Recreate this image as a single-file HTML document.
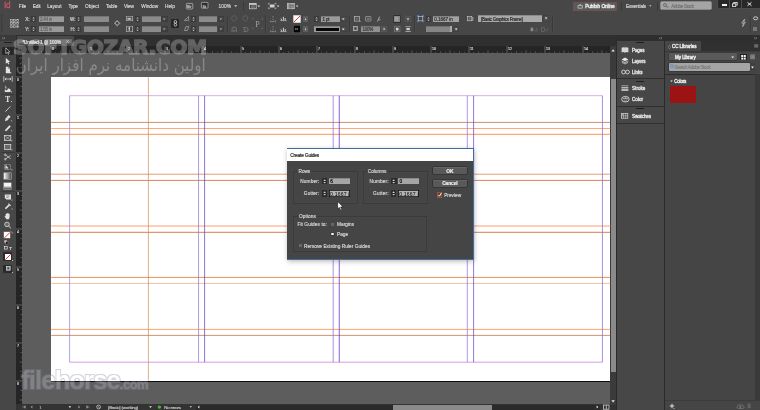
<!DOCTYPE html>
<html lang="en"><head><meta charset="utf-8"><title>Adobe InDesign - Create Guides</title>
<style>
html,body{margin:0;padding:0;background:#474747;}
body{width:760px;height:410px;position:relative;overflow:hidden;font-family:"Liberation Sans",sans-serif;}
#app{position:absolute;left:0;top:0;width:760px;height:410px;overflow:hidden;background:#474747;will-change:transform;}
#app div,#app span.t,#app svg{position:absolute;display:block;}
#app span.t{z-index:2;white-space:nowrap;-webkit-text-stroke:0.17px currentColor;}
#app svg{overflow:visible;}
</style></head>
<body><div id="app">
<div style="left:0px;top:34.5px;width:760px;height:12px;background:#2f2f2f;"></div>
<div style="left:17px;top:36px;width:57px;height:10px;background:#4a4a4a;border-radius:1px 1px 0 0;"></div>
<div style="left:0px;top:34.5px;width:16px;height:376px;background:#474747;"></div>
<div style="left:0px;top:34.5px;width:16px;height:6px;background:#3a3a3a;"></div>
<div style="left:15.5px;top:40px;width:0.6px;height:370px;background:#2a2a2a;"></div>
<div style="left:15.9px;top:45.8px;width:600.6px;height:7.2px;background:#252525;"></div>
<div style="left:15.9px;top:45.8px;width:6.1px;height:359px;background:#252525;"></div>
<div style="left:22px;top:53px;width:588.2px;height:351.3px;background:#5d5d5d;"></div>
<div style="left:50.5px;top:76.6px;width:560px;height:305px;background:#0c0c0c;"></div>
<div style="left:51.2px;top:77.2px;width:559px;height:303.5px;background:#fff;"></div>
<div style="left:15.9px;top:404.3px;width:600.6px;height:6px;background:#333;"></div>
<div style="left:610.2px;top:46px;width:6.3px;height:358.5px;background:#3b3b3b;"></div>
<div style="left:610.9px;top:78.8px;width:5.2px;height:293.7px;background:#8a8a8a;"></div>
<div style="left:196px;top:404.5px;width:404px;height:5.5px;background:#2a2a2a;"></div>
<div style="left:393.2px;top:405px;width:99.3px;height:5px;background:#8a8a8a;"></div>
<svg style="left:0px;top:0px;" width="760" height="410" viewBox="0 0 760 410"><line x1="51.2" y1="122.4" x2="610.2" y2="122.4" stroke="#b25f2d" stroke-width="0.7"/><line x1="51.2" y1="128.5" x2="610.2" y2="128.5" stroke="#ffa76f" stroke-width="0.95"/><line x1="51.2" y1="134.3" x2="610.2" y2="134.3" stroke="#ff7f2f" stroke-width="0.85"/><line x1="51.2" y1="174.2" x2="610.2" y2="174.2" stroke="#d2733c" stroke-width="0.7"/><line x1="51.2" y1="180.4" x2="610.2" y2="180.4" stroke="#c9520e" stroke-width="0.7"/><line x1="51.2" y1="226" x2="610.2" y2="226" stroke="#ffbf9c" stroke-width="1.7"/><line x1="51.2" y1="232.3" x2="610.2" y2="232.3" stroke="#c7520e" stroke-width="0.75"/><line x1="51.2" y1="277.4" x2="610.2" y2="277.4" stroke="#dd631a" stroke-width="0.7"/><line x1="51.2" y1="283.4" x2="610.2" y2="283.4" stroke="#eabc99" stroke-width="0.9"/><line x1="51.2" y1="329.4" x2="610.2" y2="329.4" stroke="#ff9958" stroke-width="0.9"/><line x1="51.2" y1="335.4" x2="610.2" y2="335.4" stroke="#b26841" stroke-width="0.7"/><line x1="148.4" y1="77.2" x2="148.4" y2="380.7" stroke="#cb854e" stroke-width="0.65"/><line x1="69.6" y1="95.7" x2="602.5" y2="95.7" stroke="#cb93da" stroke-width="0.75"/><line x1="69.6" y1="362.2" x2="602.5" y2="362.2" stroke="#c280d4" stroke-width="0.75"/><line x1="69.6" y1="95.7" x2="69.6" y2="362.2" stroke="#9a84de" stroke-width="0.75"/><line x1="602.45" y1="95.7" x2="602.45" y2="362.2" stroke="#8f68db" stroke-width="0.75"/><line x1="198.55" y1="95.7" x2="198.55" y2="362.2" stroke="#8773d8" stroke-width="0.7"/><line x1="204.6" y1="95.7" x2="204.6" y2="362.2" stroke="#5c38c7" stroke-width="0.7"/><line x1="333.2" y1="95.7" x2="333.2" y2="362.2" stroke="#8761e0" stroke-width="0.7"/><line x1="339.25" y1="95.7" x2="339.25" y2="362.2" stroke="#571ecb" stroke-width="0.7"/><line x1="467.3" y1="95.7" x2="467.3" y2="362.2" stroke="#8a70df" stroke-width="0.7"/><line x1="473.6" y1="95.7" x2="473.6" y2="362.2" stroke="#663bcd" stroke-width="0.7"/></svg>
<div style="left:616.3px;top:34.5px;width:144px;height:6.5px;background:#2e2e2e;"></div>
<div style="left:616.3px;top:41px;width:48px;height:369px;background:#474747;"></div>
<div style="left:616.2px;top:41px;width:0.9px;height:369px;background:#2a2a2a;"></div>
<div style="left:664px;top:41px;width:1px;height:369px;background:#2a2a2a;"></div>
<div style="left:665px;top:41px;width:95px;height:369px;background:#454545;"></div>
<div style="left:701px;top:41px;width:59px;height:9.8px;background:#303030;"></div>
<div style="left:665px;top:50.6px;width:95px;height:0.6px;background:#3a3a3a;"></div>
<div style="left:665px;top:41px;width:36px;height:10px;background:#464646;"></div>
<div style="left:617px;top:78.3px;width:47px;height:0.7px;background:#2f2f2f;"></div>
<div style="left:617px;top:105.6px;width:47px;height:0.7px;background:#2f2f2f;"></div>
<div style="left:617px;top:122.5px;width:47px;height:0.7px;background:#2f2f2f;"></div>
<div style="left:636px;top:42.2px;width:8px;height:1px;background:#1e1e1e;border-radius:0.5px;"></div>
<div style="left:636px;top:80.6px;width:8px;height:1px;background:#1e1e1e;border-radius:0.5px;"></div>
<div style="left:636px;top:107.9px;width:8px;height:1px;background:#1e1e1e;border-radius:0.5px;"></div>
<div style="left:669px;top:53.4px;width:67.5px;height:6.8px;background:#5a5a5a;border-radius:1px;box-shadow:0 0 0 0.5px #333;"></div>
<div style="left:740px;top:53.6px;width:7px;height:6.6px;background:#222;"></div>
<div style="left:669px;top:62.8px;width:80.5px;height:8.6px;background:#a5a5a5;border-radius:1px;box-shadow:0 0 0 0.6px #2c2c2c;"></div>
<div style="left:665px;top:73.8px;width:90.5px;height:0.7px;background:#2c2c2c;"></div>
<div style="left:755.2px;top:74px;width:4.8px;height:325.5px;background:#3a3a3a;"></div>
<div style="left:670px;top:86px;width:25.6px;height:16.6px;background:#9b1313;"></div>
<div style="left:665px;top:399.8px;width:95px;height:0.6px;background:#3b3b3b;"></div>
<div style="left:286.6px;top:148.3px;width:187.2px;height:111.4px;background:#456a9c;box-shadow:0 1px 5px 0.5px rgba(0,0,20,.28);"></div>
<div style="left:287.2px;top:148.9px;width:186px;height:12px;background:#fff;"></div>
<div style="left:287.2px;top:160.9px;width:186px;height:98.3px;background:#454545;"></div>
<div style="left:293.4px;top:171px;width:64.3px;height:33.2px;background:transparent;box-shadow:inset 0 0 0 0.7px #343434, inset 0 0 0 1.2px rgba(255,255,255,.05);border-radius:1px;"></div>
<div style="left:363px;top:171px;width:64.5px;height:33.2px;background:transparent;box-shadow:inset 0 0 0 0.7px #343434, inset 0 0 0 1.2px rgba(255,255,255,.05);border-radius:1px;"></div>
<div style="left:293.4px;top:215.7px;width:134.1px;height:36.4px;background:transparent;box-shadow:inset 0 0 0 0.7px #343434, inset 0 0 0 1.2px rgba(255,255,255,.05);border-radius:1px;"></div>
<div style="left:297.5px;top:169.5px;width:13.5px;height:3px;background:#454545;"></div>
<div style="left:367px;top:169.5px;width:20px;height:3px;background:#454545;"></div>
<div style="left:297.8px;top:214.2px;width:19.5px;height:3px;background:#454545;"></div>
<div style="left:432.5px;top:167.1px;width:34.8px;height:7.1px;background:#595959;border-radius:1px;box-shadow:0 0 0 0.6px #292929, inset 0 0.6px 0 rgba(255,255,255,.16);"></div>
<div style="left:432.5px;top:179.5px;width:34.8px;height:7.1px;background:#595959;border-radius:1px;box-shadow:0 0 0 0.6px #292929, inset 0 0.6px 0 rgba(255,255,255,.16);"></div>
<div style="left:322.1px;top:177.7px;width:5.3px;height:6.8px;background:#2b2b2b;border-radius:0.8px;"></div>
<svg style="left:322.1px;top:177.7px;" width="5.3" height="6.8" viewBox="0 0 5.3 6.8"><path d="M1.3 2.9 L2.65 1.2 L4 2.9Z M1.3 3.9 L2.65 5.6 L4 3.9Z" fill="#cfcfcf"/></svg>
<div style="left:328.8px;top:177.7px;width:21.4px;height:6.5px;background:#a6a6a6;box-shadow:inset 0 0.6px 0 #6a6a6a;"></div>
<div style="left:322px;top:190px;width:5.3px;height:6.8px;background:#2b2b2b;border-radius:0.8px;"></div>
<svg style="left:322px;top:190px;" width="5.3" height="6.8" viewBox="0 0 5.3 6.8"><path d="M1.3 2.9 L2.65 1.2 L4 2.9Z M1.3 3.9 L2.65 5.6 L4 3.9Z" fill="#cfcfcf"/></svg>
<div style="left:328.7px;top:190px;width:21.6px;height:6.9px;background:#b4b4b4;box-shadow:inset 0 0 0 0.8px #0c0c0c;"></div>
<div style="left:391.3px;top:177.7px;width:5.3px;height:6.8px;background:#2b2b2b;border-radius:0.8px;"></div>
<svg style="left:391.3px;top:177.7px;" width="5.3" height="6.8" viewBox="0 0 5.3 6.8"><path d="M1.3 2.9 L2.65 1.2 L4 2.9Z M1.3 3.9 L2.65 5.6 L4 3.9Z" fill="#cfcfcf"/></svg>
<div style="left:398px;top:177.7px;width:21.4px;height:6.5px;background:#a6a6a6;box-shadow:inset 0 0.6px 0 #6a6a6a;"></div>
<div style="left:391.2px;top:190px;width:5.3px;height:6.8px;background:#2b2b2b;border-radius:0.8px;"></div>
<svg style="left:391.2px;top:190px;" width="5.3" height="6.8" viewBox="0 0 5.3 6.8"><path d="M1.3 2.9 L2.65 1.2 L4 2.9Z M1.3 3.9 L2.65 5.6 L4 3.9Z" fill="#cfcfcf"/></svg>
<div style="left:397.9px;top:190px;width:21.6px;height:6.9px;background:#b4b4b4;box-shadow:inset 0 0 0 0.8px #0c0c0c;"></div>
<div style="left:331.1px;top:222.7px;width:2.9px;height:2.9px;background:#5e5e5e;border-radius:50%;box-shadow:inset 0 0 0 0.5px #777;"></div>
<div style="left:331.3px;top:232.9px;width:2.6px;height:2.6px;background:#f4f4f4;border-radius:50%;box-shadow:0 0 0 0.6px #2e2e2e;"></div>
<div style="left:298.5px;top:244.1px;width:3.4px;height:3.4px;background:#6a6a6a;border-radius:0.5px;"></div>
<div style="left:436.6px;top:192.4px;width:5.4px;height:5.6px;background:#4a4a4a;box-shadow:inset 0 0 0 0.8px #b4522e;border-radius:0.6px;"></div>
<svg style="left:436.6px;top:192.4px;" width="5.4" height="5.6" viewBox="0 0 5.4 5.6"><path d="M1.3 2.9 L2.4 4.2 L4.5 0.9" fill="none" stroke="#fff" stroke-width="0.9"/></svg>
<svg style="left:336.7px;top:200.7px;" width="7.5" height="10.6" viewBox="0 0 6 8.5"><path d="M0.5 0.4 L0.5 6.4 L1.9 5.2 L3 7.6 L4 7.1 L2.9 4.8 L4.8 4.7Z" fill="#fff" stroke="#111" stroke-width="0.5" stroke-linejoin="round"/></svg>
<span id="t1" class="t" style="top:152.56px;font-size:4.9px;line-height:5.88px;color:#1a1a1a;left:290.3px;letter-spacing:-0.211px;">Create Guides</span>
<span id="t2" class="t" style="top:169.25px;font-size:4.75px;line-height:5.7px;color:#d6d6d6;left:298.6px;letter-spacing:-0.121px;">Rows</span>
<span id="t3" class="t" style="top:169.25px;font-size:4.75px;line-height:5.7px;color:#d6d6d6;left:367.8px;letter-spacing:-0.022px;">Columns</span>
<span id="t4" class="t" style="top:179.35px;font-size:4.75px;line-height:5.7px;color:#d6d6d6;right:440.7px;letter-spacing:0.112px;">Number:</span>
<span id="t5" class="t" style="top:191.45px;font-size:4.75px;line-height:5.7px;color:#d6d6d6;right:440.7px;letter-spacing:0.138px;">Gutter:</span>
<span id="t6" class="t" style="top:179.35px;font-size:4.75px;line-height:5.7px;color:#d6d6d6;right:371.4px;letter-spacing:0.112px;">Number:</span>
<span id="t7" class="t" style="top:191.45px;font-size:4.75px;line-height:5.7px;color:#d6d6d6;right:371.4px;letter-spacing:0.138px;">Gutter:</span>
<span id="t8" class="t" style="top:179.06px;font-size:4.9px;line-height:5.88px;color:#000;left:330.2px;-webkit-text-stroke-width:0.15px;">6</span>
<span id="t9" class="t" style="top:179.06px;font-size:4.9px;line-height:5.88px;color:#000;left:399.4px;-webkit-text-stroke-width:0.15px;">0</span>
<span id="t10" class="t" style="top:191.34px;font-size:5.1px;line-height:6.12px;color:#000;left:330.1px;letter-spacing:0.159px;-webkit-text-stroke-width:0px;">0.1667 i</span>
<span id="t11" class="t" style="top:191.34px;font-size:5.1px;line-height:6.12px;color:#000;left:399.3px;letter-spacing:0.159px;-webkit-text-stroke-width:0px;">0.1667 i</span>
<span id="t12" class="t" style="top:168.76px;font-size:4.9px;line-height:5.88px;color:#f0f0f0;left:449.9px;transform:translateX(-50%);font-weight:700;">OK</span>
<span id="t13" class="t" style="top:181.06px;font-size:4.9px;line-height:5.88px;color:#f0f0f0;left:449.9px;transform:translateX(-50%);font-weight:700;letter-spacing:-0.107px;">Cancel</span>
<span id="t14" class="t" style="top:193.35px;font-size:4.75px;line-height:5.7px;color:#d6d6d6;left:444.2px;letter-spacing:0.013px;">Preview</span>
<span id="t15" class="t" style="top:213.95px;font-size:4.75px;line-height:5.7px;color:#d6d6d6;left:299px;letter-spacing:0.089px;">Options</span>
<span id="t16" class="t" style="top:222.15px;font-size:4.75px;line-height:5.7px;color:#d6d6d6;left:297.4px;letter-spacing:0.096px;">Fit Guides to:</span>
<span id="t17" class="t" style="top:222.15px;font-size:4.75px;line-height:5.7px;color:#d6d6d6;left:337px;letter-spacing:0.042px;">Margins</span>
<span id="t18" class="t" style="top:232.35px;font-size:4.75px;line-height:5.7px;color:#d6d6d6;left:337px;letter-spacing:0.024px;">Page</span>
<span id="t19" class="t" style="top:244.05px;font-size:4.75px;line-height:5.7px;color:#d6d6d6;left:304px;letter-spacing:0.054px;">Remove Existing Ruler Guides</span>
<span id="t20" class="t" style="top:1.28px;font-size:8.2px;line-height:9.84px;color:#c05668;left:4px;letter-spacing:-0.32px;-webkit-text-stroke-width:0.3px;">Id</span>
<span id="t21" class="t" style="top:4.05px;font-size:4.75px;line-height:5.7px;color:#d6d6d6;left:18.8px;letter-spacing:-0.066px;">File</span>
<span id="t22" class="t" style="top:4.05px;font-size:4.75px;line-height:5.7px;color:#d6d6d6;left:32.8px;letter-spacing:-0.098px;">Edit</span>
<span id="t23" class="t" style="top:4.05px;font-size:4.75px;line-height:5.7px;color:#d6d6d6;left:47.2px;letter-spacing:0.005px;">Layout</span>
<span id="t24" class="t" style="top:4.05px;font-size:4.75px;line-height:5.7px;color:#d6d6d6;left:68.4px;letter-spacing:-0.226px;">Type</span>
<span id="t25" class="t" style="top:4.05px;font-size:4.75px;line-height:5.7px;color:#d6d6d6;left:84.9px;letter-spacing:0.112px;">Object</span>
<span id="t26" class="t" style="top:4.05px;font-size:4.75px;line-height:5.7px;color:#d6d6d6;left:106px;letter-spacing:-0.013px;">Table</span>
<span id="t27" class="t" style="top:4.05px;font-size:4.75px;line-height:5.7px;color:#d6d6d6;left:124px;letter-spacing:-0.055px;">View</span>
<span id="t28" class="t" style="top:4.05px;font-size:4.75px;line-height:5.7px;color:#d6d6d6;left:141.2px;letter-spacing:-0px;">Window</span>
<span id="t29" class="t" style="top:4.05px;font-size:4.75px;line-height:5.7px;color:#d6d6d6;left:165px;letter-spacing:0.055px;">Help</span>
<span id="t30" class="t" style="top:4.05px;font-size:4.75px;line-height:5.7px;color:#d6d6d6;left:218.4px;letter-spacing:0.113px;">100%</span>
<span id="t31" class="t" style="top:4.05px;font-size:4.75px;line-height:5.7px;color:#f0f0f0;left:585.2px;letter-spacing:-0.088px;-webkit-text-stroke-width:0.3px;">Publish Online</span>
<span id="t32" class="t" style="top:4.05px;font-size:4.75px;line-height:5.7px;color:#d6d6d6;left:626px;letter-spacing:-0.166px;">Essentials</span>
<span id="t33" class="t" style="top:3.65px;font-size:4.75px;line-height:5.7px;color:#747474;left:671.2px;letter-spacing:-0.404px;">Adobe Stock</span>
<span id="t34" class="t" style="top:39.54px;font-size:4.6px;line-height:5.52px;color:#e2e2e2;left:22.4px;letter-spacing:-0.107px;">*Untitled-1 @ 100%</span>
<span id="t35" class="t" style="top:404.96px;font-size:4.4px;line-height:5.28px;color:#c8c8c8;left:108.2px;letter-spacing:-0.145px;">[Basic] (working)</span>
<span id="t36" class="t" style="top:404.96px;font-size:4.4px;line-height:5.28px;color:#c8c8c8;left:164.2px;letter-spacing:-0.201px;">No errors</span>
<span id="t37" class="t" style="top:404.96px;font-size:4.4px;line-height:5.28px;color:#a8a8a8;left:39.2px;">1</span>
<span id="t38" class="t" style="top:47.77px;font-size:4.55px;line-height:5.46px;color:#e6e6e6;left:632px;letter-spacing:-0.1px;-webkit-text-stroke-width:0.32px;">Pages</span>
<span id="t39" class="t" style="top:59.17px;font-size:4.55px;line-height:5.46px;color:#e6e6e6;left:632px;letter-spacing:-0.01px;-webkit-text-stroke-width:0.32px;">Layers</span>
<span id="t40" class="t" style="top:70.17px;font-size:4.55px;line-height:5.46px;color:#e6e6e6;left:632px;letter-spacing:-0.005px;-webkit-text-stroke-width:0.32px;">Links</span>
<span id="t41" class="t" style="top:86.27px;font-size:4.55px;line-height:5.46px;color:#e6e6e6;left:632px;letter-spacing:0.041px;-webkit-text-stroke-width:0.32px;">Stroke</span>
<span id="t42" class="t" style="top:97.37px;font-size:4.55px;line-height:5.46px;color:#e6e6e6;left:632px;letter-spacing:0.067px;-webkit-text-stroke-width:0.32px;">Color</span>
<span id="t43" class="t" style="top:113.67px;font-size:4.55px;line-height:5.46px;color:#e6e6e6;left:632px;letter-spacing:-0.09px;-webkit-text-stroke-width:0.32px;">Swatches</span>
<span id="t44" class="t" style="top:44.07px;font-size:4.55px;line-height:5.46px;color:#f0f0f0;left:672px;letter-spacing:-0.073px;-webkit-text-stroke-width:0.32px;">CC Libraries</span>
<span id="t45" class="t" style="top:55.07px;font-size:4.55px;line-height:5.46px;color:#f2f2f2;left:675px;letter-spacing:-0.063px;-webkit-text-stroke-width:0.32px;">My Library</span>
<span id="t46" class="t" style="top:65.25px;font-size:4.75px;line-height:5.7px;color:#7c7c7c;left:674.4px;letter-spacing:-0.392px;">Search Adobe Stock</span>
<span id="t47" class="t" style="top:79.27px;font-size:4.55px;line-height:5.46px;color:#f0f0f0;left:674.2px;letter-spacing:-0.19px;-webkit-text-stroke-width:0.32px;">Colors</span>
<span id="t48" class="t" style="top:16.8px;font-size:4.5px;line-height:5.4px;color:#d6d6d6;left:25.2px;">X:</span>
<span id="t49" class="t" style="top:26.8px;font-size:4.5px;line-height:5.4px;color:#d6d6d6;left:25.2px;">Y:</span>
<span id="t50" class="t" style="top:16.8px;font-size:4.5px;line-height:5.4px;color:#d6d6d6;left:70px;">W:</span>
<span id="t51" class="t" style="top:26.8px;font-size:4.5px;line-height:5.4px;color:#d6d6d6;left:70.4px;">H:</span>
<span id="t52" class="t" style="top:16.8px;font-size:4.5px;line-height:5.4px;color:#5c5c5c;left:40px;letter-spacing:-0.217px;-webkit-text-stroke-width:0.1px;">2.44 in</span>
<span id="t53" class="t" style="top:26.8px;font-size:4.5px;line-height:5.4px;color:#5c5c5c;left:40px;letter-spacing:-0.217px;-webkit-text-stroke-width:0.1px;">1.55 in</span>
<span id="t54" class="t" style="top:17px;font-size:4.5px;line-height:5.4px;color:#2a2a2a;left:322.4px;letter-spacing:-0.129px;">1 pt</span>
<span id="t55" class="t" style="top:27.1px;font-size:4.5px;line-height:5.4px;color:#3a3a3a;left:362.4px;letter-spacing:-0.254px;">100%</span>
<span id="t56" class="t" style="top:17px;font-size:4.5px;line-height:5.4px;color:#2a2a2a;left:434.2px;letter-spacing:-0.003px;">0.1667 in</span>
<span id="t57" class="t" style="top:16.94px;font-size:4.6px;line-height:5.52px;color:#2a2a2a;left:481px;letter-spacing:-0.296px;">[Basic Graphics Frame]</span>
<svg style="left:1.4px;top:14px;" width="2" height="19" viewBox="0 0 2 19"><rect x="0.4" y="0" width="0.9" height="0.7" fill="#2c2c2c"/><rect x="0.4" y="1.45" width="0.9" height="0.7" fill="#2c2c2c"/><rect x="0.4" y="2.9" width="0.9" height="0.7" fill="#2c2c2c"/><rect x="0.4" y="4.35" width="0.9" height="0.7" fill="#2c2c2c"/><rect x="0.4" y="5.8" width="0.9" height="0.7" fill="#2c2c2c"/><rect x="0.4" y="7.25" width="0.9" height="0.7" fill="#2c2c2c"/><rect x="0.4" y="8.7" width="0.9" height="0.7" fill="#2c2c2c"/><rect x="0.4" y="10.15" width="0.9" height="0.7" fill="#2c2c2c"/><rect x="0.4" y="11.6" width="0.9" height="0.7" fill="#2c2c2c"/><rect x="0.4" y="13.05" width="0.9" height="0.7" fill="#2c2c2c"/><rect x="0.4" y="14.5" width="0.9" height="0.7" fill="#2c2c2c"/><rect x="0.4" y="15.95" width="0.9" height="0.7" fill="#2c2c2c"/><rect x="0.4" y="17.4" width="0.9" height="0.7" fill="#2c2c2c"/></svg>
<svg style="left:10px;top:19px;" width="9" height="9" viewBox="0 0 9 9"><rect x="0.6" y="0.6" width="1.7" height="1.7" fill="none" stroke="#cfcfcf" stroke-width="0.55"/><rect x="0.6" y="3.7" width="1.7" height="1.7" fill="none" stroke="#cfcfcf" stroke-width="0.55"/><rect x="0.6" y="6.8" width="1.7" height="1.7" fill="none" stroke="#cfcfcf" stroke-width="0.55"/><rect x="3.7" y="0.6" width="1.7" height="1.7" fill="none" stroke="#cfcfcf" stroke-width="0.55"/><rect x="3.7" y="3.7" width="1.7" height="1.7" fill="none" stroke="#cfcfcf" stroke-width="0.55"/><rect x="3.7" y="6.8" width="1.7" height="1.7" fill="none" stroke="#cfcfcf" stroke-width="0.55"/><rect x="6.8" y="0.6" width="1.7" height="1.7" fill="none" stroke="#cfcfcf" stroke-width="0.55"/><rect x="6.8" y="3.7" width="1.7" height="1.7" fill="none" stroke="#cfcfcf" stroke-width="0.55"/><rect x="6.8" y="6.8" width="1.7" height="1.7" fill="none" stroke="#cfcfcf" stroke-width="0.55"/><path d="M1.5 1.5H7.7M1.5 4.6H7.7M1.5 7.7H7.7" stroke="#bdbdbd" stroke-width="0.35" stroke-dasharray="0.5 0.5"/></svg>
<div style="left:30.8px;top:15.5px;width:5.2px;height:6.4px;background:#3e3e3e;border-radius:0.6px;box-shadow:inset 0 0 0 0.4px #353535;"></div>
<svg style="left:30.8px;top:15.5px;" width="5.2" height="6.4" viewBox="0 0 5.2 6.4"><path d="M1.4 2.6 l1.2 -1.5 l1.2 1.5Z M1.4 3.8 l1.2 1.5 l1.2 -1.5Z" fill="#b9b9b9"/></svg>
<div style="left:38.8px;top:15.5px;width:25.6px;height:6px;background:#999;box-shadow:inset 0 0.5px 0 rgba(0,0,0,.35);"></div>
<div style="left:75.8px;top:15.5px;width:5.2px;height:6.4px;background:#3e3e3e;border-radius:0.6px;box-shadow:inset 0 0 0 0.4px #353535;"></div>
<svg style="left:75.8px;top:15.5px;" width="5.2" height="6.4" viewBox="0 0 5.2 6.4"><path d="M1.4 2.6 l1.2 -1.5 l1.2 1.5Z M1.4 3.8 l1.2 1.5 l1.2 -1.5Z" fill="#b9b9b9"/></svg>
<div style="left:83.6px;top:15.5px;width:25.6px;height:6px;background:#8b8b8b;box-shadow:inset 0 0.5px 0 rgba(0,0,0,.35);"></div>
<div style="left:30.8px;top:25.6px;width:5.2px;height:6.4px;background:#3e3e3e;border-radius:0.6px;box-shadow:inset 0 0 0 0.4px #353535;"></div>
<svg style="left:30.8px;top:25.6px;" width="5.2" height="6.4" viewBox="0 0 5.2 6.4"><path d="M1.4 2.6 l1.2 -1.5 l1.2 1.5Z M1.4 3.8 l1.2 1.5 l1.2 -1.5Z" fill="#b9b9b9"/></svg>
<div style="left:38.8px;top:25.6px;width:25.6px;height:6px;background:#999;box-shadow:inset 0 0.5px 0 rgba(0,0,0,.35);"></div>
<div style="left:75.8px;top:25.6px;width:5.2px;height:6.4px;background:#3e3e3e;border-radius:0.6px;box-shadow:inset 0 0 0 0.4px #353535;"></div>
<svg style="left:75.8px;top:25.6px;" width="5.2" height="6.4" viewBox="0 0 5.2 6.4"><path d="M1.4 2.6 l1.2 -1.5 l1.2 1.5Z M1.4 3.8 l1.2 1.5 l1.2 -1.5Z" fill="#b9b9b9"/></svg>
<div style="left:83.6px;top:25.6px;width:25.6px;height:6px;background:#8b8b8b;box-shadow:inset 0 0.5px 0 rgba(0,0,0,.35);"></div>
<svg style="left:113.6px;top:20.4px;" width="6.4" height="6.4" viewBox="0 0 6.4 6.4"><circle cx="3.2" cy="3.2" r="1.9" fill="none" stroke="#c9c9c9" stroke-width="0.7"/><path d="M3.2 0v1.3M3.2 5.1v1.3M0 3.2h1.3M5.1 3.2h1.3" stroke="#c9c9c9" stroke-width="0.6"/></svg>
<div style="left:126px;top:15.6px;width:6.6px;height:5.6px;background:transparent;box-shadow:inset 0 0 0 0.6px #c4c4c4;border-radius:0.5px;"></div>
<svg style="left:126px;top:15.6px;" width="6.6" height="5.6" viewBox="0 0 6.6 5.6"><path d="M1.3 2.8h4M1.3 2.8l1-0.9M1.3 2.8l1 0.9M5.3 2.8l-1-0.9M5.3 2.8l-1 0.9" stroke="#d8d8d8" stroke-width="0.55" fill="none"/><rect x="2.3" y="1.9" width="2" height="1.8" fill="#d0d0d0"/></svg>
<div style="left:126px;top:25.8px;width:6.6px;height:5.8px;background:transparent;box-shadow:inset 0 0 0 0.6px #c4c4c4;border-radius:0.5px;"></div>
<svg style="left:126px;top:25.8px;" width="6.6" height="5.8" viewBox="0 0 6.6 5.8"><path d="M3.3 1v3.8M3.3 4.8l-0.9-1M3.3 4.8l0.9-1" stroke="#d8d8d8" stroke-width="0.6" fill="none"/><rect x="2.6" y="1.2" width="1.4" height="2.2" fill="#d0d0d0"/></svg>
<div style="left:135px;top:15.5px;width:5.2px;height:6.4px;background:#3e3e3e;border-radius:0.6px;box-shadow:inset 0 0 0 0.4px #353535;"></div>
<svg style="left:135px;top:15.5px;" width="5.2" height="6.4" viewBox="0 0 5.2 6.4"><path d="M1.4 2.6 l1.2 -1.5 l1.2 1.5Z M1.4 3.8 l1.2 1.5 l1.2 -1.5Z" fill="#b9b9b9"/></svg>
<div style="left:142.2px;top:15.5px;width:18.8px;height:6px;background:#8b8b8b;box-shadow:inset 0 0.5px 0 rgba(0,0,0,.35);"></div>
<div style="left:161.4px;top:15.5px;width:6.4px;height:6.2px;background:#424242;border-radius:0.6px;box-shadow:inset 0 0 0 0.4px #383838;"></div>
<svg style="left:161.4px;top:15.5px;" width="6.4" height="6.2" viewBox="0 0 6.4 6.2"><path d="M1.9 2.4 h2.6 l-1.3 1.7Z" fill="#b5b5b5"/></svg>
<div style="left:135px;top:25.6px;width:5.2px;height:6.4px;background:#3e3e3e;border-radius:0.6px;box-shadow:inset 0 0 0 0.4px #353535;"></div>
<svg style="left:135px;top:25.6px;" width="5.2" height="6.4" viewBox="0 0 5.2 6.4"><path d="M1.4 2.6 l1.2 -1.5 l1.2 1.5Z M1.4 3.8 l1.2 1.5 l1.2 -1.5Z" fill="#b9b9b9"/></svg>
<div style="left:142.2px;top:25.6px;width:18.8px;height:6px;background:#8b8b8b;box-shadow:inset 0 0.5px 0 rgba(0,0,0,.35);"></div>
<div style="left:161.4px;top:25.6px;width:6.4px;height:6.2px;background:#424242;border-radius:0.6px;box-shadow:inset 0 0 0 0.4px #383838;"></div>
<svg style="left:161.4px;top:25.6px;" width="6.4" height="6.2" viewBox="0 0 6.4 6.2"><path d="M1.9 2.4 h2.6 l-1.3 1.7Z" fill="#b5b5b5"/></svg>
<div style="left:171px;top:19px;width:8.4px;height:9.2px;background:#262626;border-radius:0.8px;"></div>
<svg style="left:171.8px;top:19.3px;" width="6.8" height="8.6" viewBox="0 0 6.8 8.6"><ellipse cx="3.4" cy="2.9" rx="1.25" ry="1.45" fill="none" stroke="#e8e8e8" stroke-width="0.7"/><ellipse cx="3.4" cy="5.7" rx="1.25" ry="1.45" fill="none" stroke="#e8e8e8" stroke-width="0.7"/></svg>
<svg style="left:183.6px;top:16.4px;" width="5" height="5" viewBox="0 0 5 5"><path d="M0.4 4.4H4.6L4.6 0.6Z" fill="none" stroke="#c6c6c6" stroke-width="0.55"/></svg>
<svg style="left:183.6px;top:26.4px;" width="5.4" height="5" viewBox="0 0 5.4 5"><path d="M0.5 4.5L2 0.6H4.8L3.3 4.5Z" fill="none" stroke="#c6c6c6" stroke-width="0.55"/></svg>
<div style="left:191px;top:15.5px;width:5.2px;height:6.4px;background:#3e3e3e;border-radius:0.6px;box-shadow:inset 0 0 0 0.4px #353535;"></div>
<svg style="left:191px;top:15.5px;" width="5.2" height="6.4" viewBox="0 0 5.2 6.4"><path d="M1.4 2.6 l1.2 -1.5 l1.2 1.5Z M1.4 3.8 l1.2 1.5 l1.2 -1.5Z" fill="#b9b9b9"/></svg>
<div style="left:198.8px;top:15.5px;width:18px;height:6px;background:#8b8b8b;box-shadow:inset 0 0.5px 0 rgba(0,0,0,.35);"></div>
<div style="left:218px;top:15.5px;width:5.8px;height:6.2px;background:#424242;border-radius:0.6px;box-shadow:inset 0 0 0 0.4px #383838;"></div>
<svg style="left:218px;top:15.5px;" width="5.8" height="6.2" viewBox="0 0 5.8 6.2"><path d="M1.6 2.4 h2.6 l-1.3 1.7Z" fill="#b5b5b5"/></svg>
<div style="left:191px;top:25.6px;width:5.2px;height:6.4px;background:#3e3e3e;border-radius:0.6px;box-shadow:inset 0 0 0 0.4px #353535;"></div>
<svg style="left:191px;top:25.6px;" width="5.2" height="6.4" viewBox="0 0 5.2 6.4"><path d="M1.4 2.6 l1.2 -1.5 l1.2 1.5Z M1.4 3.8 l1.2 1.5 l1.2 -1.5Z" fill="#b9b9b9"/></svg>
<div style="left:198.8px;top:25.6px;width:18px;height:6px;background:#8b8b8b;box-shadow:inset 0 0.5px 0 rgba(0,0,0,.35);"></div>
<div style="left:218px;top:25.6px;width:5.8px;height:6.2px;background:#424242;border-radius:0.6px;box-shadow:inset 0 0 0 0.4px #383838;"></div>
<svg style="left:218px;top:25.6px;" width="5.8" height="6.2" viewBox="0 0 5.8 6.2"><path d="M1.6 2.4 h2.6 l-1.3 1.7Z" fill="#b5b5b5"/></svg>
<div style="left:227.4px;top:14.5px;width:0.6px;height:18.5px;background:#3a3a3a;box-shadow:0.6px 0 0 rgba(255,255,255,.04);"></div>
<svg style="left:231px;top:15.3px;" width="6.4" height="6.4" viewBox="0 0 6.4 6.4"><circle cx="3.2" cy="3.3" r="2.5" fill="none" stroke="#8c8c8c" stroke-width="0.55" stroke-dasharray="0.8 0.5"/></svg>
<svg style="left:242px;top:15.3px;" width="6.4" height="6.4" viewBox="0 0 6.4 6.4"><circle cx="3.2" cy="3.3" r="2.5" fill="none" stroke="#8c8c8c" stroke-width="0.55" stroke-dasharray="0.8 0.5"/></svg>
<svg style="left:231px;top:25.6px;" width="6.4" height="6.6" viewBox="0 0 6.4 6.6"><path d="M1 6V3.2a2.2 2.2 0 0 1 4.4 0V6" fill="none" stroke="#8c8c8c" stroke-width="0.6"/><path d="M2.3 6V4.2h1.8V6" fill="none" stroke="#8c8c8c" stroke-width="0.5"/></svg>
<svg style="left:242px;top:25.6px;" width="6.6" height="6.6" viewBox="0 0 6.6 6.6"><path d="M1 1.6h3.2a1.9 1.9 0 0 1 0 3.8H1.4" fill="none" stroke="#8c8c8c" stroke-width="0.6"/><path d="M1 3h2v2.6" fill="none" stroke="#8c8c8c" stroke-width="0.5"/></svg>
<svg style="left:252.4px;top:18.4px;" width="11" height="11" viewBox="0 0 11 11"><path d="M0.5 2V0.5H2M9 0.5h1.5V2M0.5 9v1.5H2M9 10.5h1.5V9" fill="none" stroke="#8a8a8a" stroke-width="0.5" stroke-dasharray="0.6 0.4"/></svg>
<span id="t58" class="t" style="top:19.7px;font-size:8px;line-height:9.6px;color:#a0a0a0;left:255.2px;font-family:'Liberation Serif',serif;-webkit-text-stroke-width:0px;">P</span>
<div style="left:265.4px;top:14.5px;width:0.6px;height:18.5px;background:#3a3a3a;box-shadow:0.6px 0 0 rgba(255,255,255,.04);"></div>
<svg style="left:269.6px;top:15.6px;" width="6" height="6.6" viewBox="0 0 6 6.6"><path d="M3 0.3v1.6M3 2.9v1M0.6 5.6h4.8M0.6 4.6v1.6M5.4 4.6v1.6" stroke="#c9c9c9" stroke-width="0.6" fill="none" stroke-dasharray="0.9 0.45"/></svg>
<svg style="left:269.6px;top:25.8px;" width="6" height="6.6" viewBox="0 0 6 6.6"><path d="M3 0.3v1.6M3 2.9v1M0.6 5.6h4.8M0.6 4.6v1.6M5.4 4.6v1.6" stroke="#c9c9c9" stroke-width="0.6" fill="none" stroke-dasharray="0.9 0.45"/></svg>
<svg style="left:279.8px;top:16.4px;" width="7" height="5.4" viewBox="0 0 7 5.4"><path d="M0.3 4.6h6.4" stroke="#c9c9c9" stroke-width="0.6"/><path d="M1.4 4.4v-1.6M3.4 4.4V0.8M5.2 4.4V2" stroke="#dcdcdc" stroke-width="0.9"/><path d="M0.4 2.4l0.8-0.8" stroke="#c9c9c9" stroke-width="0.5"/></svg>
<svg style="left:279.8px;top:26.6px;" width="7" height="5.4" viewBox="0 0 7 5.4"><path d="M0.3 4.6h6.4" stroke="#c9c9c9" stroke-width="0.6"/><path d="M1.4 4.4v-1.6M3.4 4.4V0.8M5.2 4.4V2" stroke="#dcdcdc" stroke-width="0.9"/><path d="M0.4 2.4l0.8-0.8" stroke="#c9c9c9" stroke-width="0.5"/></svg>
<div style="left:292.5px;top:14.6px;width:8px;height:8px;background:#fff;box-shadow:inset 0 0 0 0.6px #9a9a9a;"></div>
<svg style="left:292.5px;top:14.6px;" width="8" height="8" viewBox="0 0 8 8"><path d="M0.6 7.4L7.4 0.6" stroke="#e0231b" stroke-width="0.9"/></svg>
<div style="left:292.5px;top:25px;width:8px;height:7.8px;background:#050505;box-shadow:inset 0 0 0 0.6px #6a6a6a;"></div>
<div style="left:295.2px;top:27.6px;width:2.8px;height:2.8px;background:transparent;box-shadow:inset 0 0 0 0.6px #7c7c7c;"></div>
<div style="left:303px;top:15.6px;width:5px;height:6.4px;background:#5e5e5e;border-radius:0.6px;"></div>
<svg style="left:303px;top:15.6px;" width="5" height="6.4" viewBox="0 0 5 6.4"><path d="M2 2.2v2l1.3-1Z" fill="#e8e8e8"/></svg>
<div style="left:303px;top:25.8px;width:5px;height:6.4px;background:#5e5e5e;border-radius:0.6px;"></div>
<svg style="left:303px;top:25.8px;" width="5" height="6.4" viewBox="0 0 5 6.4"><path d="M2 2.2v2l1.3-1Z" fill="#e8e8e8"/></svg>
<div style="left:314.2px;top:15.5px;width:5.2px;height:6.4px;background:#3e3e3e;border-radius:0.6px;box-shadow:inset 0 0 0 0.4px #353535;"></div>
<svg style="left:314.2px;top:15.5px;" width="5.2" height="6.4" viewBox="0 0 5.2 6.4"><path d="M1.4 2.6 l1.2 -1.5 l1.2 1.5Z M1.4 3.8 l1.2 1.5 l1.2 -1.5Z" fill="#b9b9b9"/></svg>
<div style="left:321px;top:15.5px;width:18.6px;height:6px;background:#9a9a9a;box-shadow:inset 0 0.5px 0 rgba(0,0,0,.35);"></div>
<div style="left:340px;top:15.5px;width:6.5px;height:6.2px;background:#4c4c4c;border-radius:0.6px;box-shadow:inset 0 0 0 0.4px #383838;"></div>
<svg style="left:340px;top:15.5px;" width="6.5" height="6.2" viewBox="0 0 6.5 6.2"><path d="M1.95 2.4 h2.6 l-1.3 1.7Z" fill="#f0f0f0"/></svg>
<div style="left:314.2px;top:25.6px;width:25.4px;height:6.4px;background:#9a9a9a;box-shadow:inset 0 0.5px 0 rgba(0,0,0,.35);"></div>
<div style="left:315.6px;top:27.5px;width:23px;height:3px;background:#050505;"></div>
<div style="left:340px;top:25.6px;width:6.5px;height:6.4px;background:#4c4c4c;border-radius:0.6px;box-shadow:inset 0 0 0 0.4px #383838;"></div>
<svg style="left:340px;top:25.6px;" width="6.5" height="6.4" viewBox="0 0 6.5 6.4"><path d="M1.95 2.5 h2.6 l-1.3 1.7Z" fill="#f0f0f0"/></svg>
<div style="left:349.4px;top:14.5px;width:0.6px;height:18.5px;background:#3a3a3a;box-shadow:0.6px 0 0 rgba(255,255,255,.04);"></div>
<svg style="left:353.6px;top:15.8px;" width="7" height="6.4" viewBox="0 0 7 6.4"><rect x="0.5" y="0.5" width="4.8" height="4.6" fill="none" stroke="#cfcfcf" stroke-width="0.6"/><path d="M2.9 0.5v4.6M0.5 2.8h4.8" stroke="#9a9a9a" stroke-width="0.4"/><rect x="5.6" y="5" width="0.9" height="0.9" fill="#cfcfcf"/></svg>
<svg style="left:364.6px;top:15.8px;" width="7" height="6.4" viewBox="0 0 7 6.4"><rect x="0.5" y="0.5" width="5.4" height="4.6" rx="0.6" fill="none" stroke="#b5b5b5" stroke-width="0.6"/><rect x="1.8" y="1.8" width="2.8" height="2" fill="#7c7c7c"/></svg>
<svg style="left:376.6px;top:15.8px;" width="4" height="6.4" viewBox="0 0 4 6.4"><path d="M0.5 5.6L2.6 0.6" stroke="#cfcfcf" stroke-width="0.7"/><path d="M1.4 3.8h2.4" stroke="#cfcfcf" stroke-width="0.5"/></svg>
<svg style="left:352.8px;top:26.4px;" width="5" height="5.4" viewBox="0 0 5 5.4"><rect x="0.4" y="0.4" width="4" height="4.4" fill="#8a8a8a" stroke="#cfcfcf" stroke-width="0.5"/><rect x="1.5" y="1.4" width="1.9" height="2.2" fill="#3a3a3a"/></svg>
<div style="left:361px;top:26px;width:19.4px;height:5.8px;background:#909090;box-shadow:inset 0 0.5px 0 rgba(0,0,0,.35);"></div>
<div style="left:380.6px;top:26px;width:6.4px;height:6px;background:#555;border-radius:0.6px;"></div>
<svg style="left:380.6px;top:26px;" width="6.4" height="6" viewBox="0 0 6.4 6"><path d="M2.6 1.8v2.4l1.6-1.2Z" fill="#e8e8e8"/></svg>
<div style="left:393.4px;top:14.6px;width:7.2px;height:8px;background:#868686;box-shadow:inset 0 0 0 0.9px #2e2e2e;border-radius:0.6px;"></div>
<svg style="left:393.4px;top:14.6px;" width="7.2" height="8" viewBox="0 0 7.2 8"><path d="M1.8 2.4h3.6M1.8 3.4h3.6M1.8 4.4h3.6M1.8 5.4h3.6" stroke="#b8b8b8" stroke-width="0.5"/></svg>
<svg style="left:404.8px;top:15.8px;" width="6" height="6" viewBox="0 0 6 6"><rect x="0.4" y="0.4" width="5.2" height="5.2" fill="none" stroke="#777" stroke-width="0.5" stroke-dasharray="0.8 0.5"/><rect x="1.8" y="1.8" width="2.4" height="2.4" fill="#999"/></svg>
<svg style="left:393.8px;top:26px;" width="6.4" height="6.2" viewBox="0 0 6.4 6.2"><rect x="0.4" y="0.4" width="5.6" height="5.4" fill="none" stroke="#8a8a8a" stroke-width="0.5"/><circle cx="3.2" cy="3.1" r="1.6" fill="#d0d0d0"/></svg>
<svg style="left:404.8px;top:26px;" width="6.2" height="6.2" viewBox="0 0 6.2 6.2"><path d="M0.4 0.7h5.4M0.4 5.5h5.4" stroke="#c4c4c4" stroke-width="0.7"/><rect x="1.4" y="2" width="3.4" height="2.2" fill="#d0d0d0"/></svg>
<div style="left:414.4px;top:14.5px;width:0.6px;height:18.5px;background:#3a3a3a;box-shadow:0.6px 0 0 rgba(255,255,255,.04);"></div>
<svg style="left:416.8px;top:15.4px;" width="7" height="7.2" viewBox="0 0 7 7.2"><rect x="1.2" y="1.3" width="4.6" height="4.6" fill="none" stroke="#cdd6e6" stroke-width="0.6"/><path d="M0.3 2V0.4H2M5 0.4h1.7V2M0.3 5.2v1.6H2M5 6.8h1.7V5.2" fill="none" stroke="#4f8be0" stroke-width="0.75"/></svg>
<div style="left:426px;top:15.5px;width:5px;height:6.4px;background:#3e3e3e;border-radius:0.6px;box-shadow:inset 0 0 0 0.4px #353535;"></div>
<svg style="left:426px;top:15.5px;" width="5" height="6.4" viewBox="0 0 5 6.4"><path d="M1.3 2.6 l1.2 -1.5 l1.2 1.5Z M1.3 3.8 l1.2 1.5 l1.2 -1.5Z" fill="#b9b9b9"/></svg>
<div style="left:433px;top:15.5px;width:26.2px;height:6px;background:#a2a2a2;box-shadow:inset 0 0.5px 0 rgba(0,0,0,.35);"></div>
<div style="left:425.8px;top:25.6px;width:26.4px;height:6.4px;background:#868686;box-shadow:inset 0 0.5px 0 rgba(0,0,0,.35);"></div>
<div style="left:450.4px;top:26.2px;width:1.6px;height:5.4px;background:#a8a8a8;"></div>
<div style="left:452.8px;top:25.6px;width:6.4px;height:6.4px;background:#4c4c4c;border-radius:0.6px;box-shadow:inset 0 0 0 0.4px #383838;"></div>
<svg style="left:452.8px;top:25.6px;" width="6.4" height="6.4" viewBox="0 0 6.4 6.4"><path d="M1.9 2.5 h2.6 l-1.3 1.7Z" fill="#f0f0f0"/></svg>
<svg style="left:467px;top:15.8px;" width="6.6" height="5.6" viewBox="0 0 6.6 5.6"><rect x="0.4" y="0.4" width="4.4" height="4.4" fill="none" stroke="#cfcfcf" stroke-width="0.6"/><path d="M1.6 1.8h2M1.6 3.2h2" stroke="#cfcfcf" stroke-width="0.5"/><path d="M5.8 1v4" stroke="#cfcfcf" stroke-width="0.7"/></svg>
<div style="left:478.4px;top:15.4px;width:63.8px;height:6.6px;background:#a8a8a8;box-shadow:inset 0 0.5px 0 rgba(0,0,0,.35);"></div>
<div style="left:543px;top:15.4px;width:6.2px;height:6.6px;background:#4c4c4c;border-radius:0.6px;box-shadow:inset 0 0 0 0.4px #383838;"></div>
<svg style="left:543px;top:15.4px;" width="6.2" height="6.6" viewBox="0 0 6.2 6.6"><path d="M1.8 2.6 h2.6 l-1.3 1.7Z" fill="#f0f0f0"/></svg>
<svg style="left:530px;top:27px;" width="8.4" height="5" viewBox="0 0 8.4 5"><path d="M0.6 0.6h2.6v3.6H0.6Z" fill="#8a8a8a"/><path d="M4.4 2.6a1.5 1.5 0 1 0 1.5-1.5" fill="none" stroke="#7c7c7c" stroke-width="0.5"/></svg>
<svg style="left:541px;top:27px;" width="8.4" height="5" viewBox="0 0 8.4 5"><rect x="0.6" y="0.8" width="2.8" height="3.4" fill="none" stroke="#7c7c7c" stroke-width="0.5"/><path d="M4.8 2.8l0.9 1 1.7-2.4" fill="none" stroke="#7c7c7c" stroke-width="0.5"/></svg>
<div style="left:552.2px;top:14.5px;width:0.6px;height:18.5px;background:#3a3a3a;box-shadow:0.6px 0 0 rgba(255,255,255,.04);"></div>
<svg style="left:741.2px;top:19.4px;" width="5" height="8" viewBox="0 0 5 8"><path d="M3.2 0.4L0.8 4.2H2.6L1.6 7.6L4.4 3.2H2.6L3.8 0.4Z" fill="none" stroke="#e4e4e4" stroke-width="0.55" stroke-linejoin="round"/></svg>
<div style="left:750.2px;top:14.5px;width:0.6px;height:18.5px;background:#3a3a3a;box-shadow:0.6px 0 0 rgba(255,255,255,.04);"></div>
<svg style="left:752.8px;top:16.4px;" width="5.2" height="4.6" viewBox="0 0 5.2 4.6"><ellipse cx="2.6" cy="2.3" rx="2.1" ry="1.5" fill="none" stroke="#e4e4e4" stroke-width="0.8"/></svg>
<div style="left:753.2px;top:27.2px;width:3.8px;height:3.8px;background:#767676;"></div>
<svg style="left:185.8px;top:2.6px;" width="7.2" height="6.4" viewBox="0 0 7.2 6.4"><rect x="0.4" y="0.4" width="6.4" height="5.6" rx="0.8" fill="none" stroke="#d4d4d4" stroke-width="0.6"/></svg>
<span id="t59" class="t" style="top:4.74px;font-size:3.6px;line-height:4.32px;color:#e0e0e0;left:187.3px;font-weight:700;-webkit-text-stroke-width:0px;">Br</span>
<svg style="left:200.8px;top:2.4px;" width="7.4" height="6.6" viewBox="0 0 7.4 6.6"><rect x="0.4" y="0.4" width="6.6" height="5.8" rx="0.8" fill="#2e2e2e" stroke="#d4d4d4" stroke-width="0.6"/></svg>
<span id="t60" class="t" style="top:4.64px;font-size:3.6px;line-height:4.32px;color:#e0e0e0;left:202.6px;font-weight:700;-webkit-text-stroke-width:0px;">St</span>
<svg style="left:234px;top:5px;" width="3.4" height="2.4" viewBox="0 0 3.4 2.4"><path d="M0.2 0.3h3l-1.5 1.8Z" fill="#d4d4d4"/></svg>
<div style="left:243px;top:1.5px;width:0.6px;height:9px;background:#3a3a3a;"></div>
<svg style="left:249px;top:2.8px;" width="11.4" height="6.2" viewBox="0 0 11.4 6.2"><rect x="0.4" y="0.4" width="6.8" height="5.4" fill="none" stroke="#d4d4d4" stroke-width="0.7"/><rect x="0.4" y="0.4" width="6.8" height="1.4" fill="#d4d4d4"/><path d="M2.2 3h3.6M2.2 4.3h3.6" stroke="#bdbdbd" stroke-width="0.5"/><path d="M8.4 2.5h2.8l-1.4 1.7Z" fill="#d4d4d4"/></svg>
<svg style="left:267.8px;top:2.8px;" width="11.6" height="6.2" viewBox="0 0 11.6 6.2"><rect x="1.8" y="1.5" width="4.8" height="3" fill="#cfcfcf"/><path d="M0.4 1.6V0.4H1.8M6.6 0.4H8V1.6M0.4 4.4V5.6H1.8M6.6 5.6H8V4.4" fill="none" stroke="#d4d4d4" stroke-width="0.6"/><path d="M8.8 2.5h2.6l-1.3 1.7Z" fill="#d4d4d4"/></svg>
<svg style="left:287px;top:2.8px;" width="11.6" height="6.2" viewBox="0 0 11.6 6.2"><rect x="0.4" y="0.4" width="7.2" height="5.4" fill="#9a9a9a" stroke="#d4d4d4" stroke-width="0.6"/><path d="M3 0.4v5.4M3 2.2h4.6M3 4h4.6" stroke="#4a4a4a" stroke-width="0.5"/><path d="M8.8 2.5h2.6l-1.3 1.7Z" fill="#d4d4d4"/></svg>
<div style="left:573.4px;top:1.6px;width:43.8px;height:9px;background:#5a5a5a;border-radius:0.8px;box-shadow:0 0 0 0.6px #6e3a3a;"></div>
<svg style="left:576.8px;top:3.2px;" width="6.4" height="5.6" viewBox="0 0 6.4 5.6"><path d="M1 2.6h4.4v2.6H1Z" fill="none" stroke="#e2e2e2" stroke-width="0.6"/><path d="M2 2.4a1.3 1.3 0 0 1 2.5 0" fill="none" stroke="#e2e2e2" stroke-width="0.55"/></svg>
<div style="left:621.2px;top:1.5px;width:0.6px;height:9px;background:#3a3a3a;"></div>
<svg style="left:649.4px;top:5.2px;" width="2.6" height="2" viewBox="0 0 2.6 2"><path d="M0.2 0.3h2.2l-1.1 1.4Z" fill="#cfcfcf"/></svg>
<div style="left:657px;top:1.5px;width:0.6px;height:9px;background:#3a3a3a;"></div>
<div style="left:661.4px;top:2px;width:49.8px;height:7.2px;background:#a4a4a4;border-radius:0.8px;box-shadow:0 0 0 0.5px #c8c8c8;"></div>
<svg style="left:663px;top:3.2px;" width="6" height="5" viewBox="0 0 6 5"><circle cx="2" cy="2" r="1.5" fill="none" stroke="#4a4a4a" stroke-width="0.6"/><path d="M3 3.2l1.2 1.3" stroke="#4a4a4a" stroke-width="0.7"/><path d="M4.4 3.6h1.4l-0.7 0.9Z" fill="#4a4a4a"/></svg>
<div style="left:718.4px;top:0px;width:41.6px;height:7.6px;background:#282828;border-radius:0 0 0 1.5px;box-shadow:0 0 0 0.5px #555;"></div>
<div style="left:729px;top:0px;width:0.6px;height:7.6px;background:#4c4c4c;"></div>
<div style="left:740.6px;top:0px;width:0.6px;height:7.6px;background:#4c4c4c;"></div>
<div style="left:722px;top:4.2px;width:4.6px;height:1.8px;background:#f2f2f2;"></div>
<svg style="left:732.4px;top:1.6px;" width="5.6" height="5" viewBox="0 0 5.6 5"><rect x="1.8" y="0.4" width="3.4" height="2.6" fill="none" stroke="#f2f2f2" stroke-width="0.8"/><rect x="0.4" y="1.8" width="3.4" height="2.6" fill="#282828" stroke="#f2f2f2" stroke-width="0.8"/></svg>
<svg style="left:747.4px;top:1.6px;" width="5" height="4.2" viewBox="0 0 5 4.2"><path d="M0.5 0.4l4 3.4M4.5 0.4l-4 3.4" stroke="#f2f2f2" stroke-width="0.95"/></svg>
<svg style="left:65.8px;top:40.2px;" width="3" height="3" viewBox="0 0 3 3"><path d="M0.3 0.3l2.4 2.4M2.7 0.3l-2.4 2.4" stroke="#d8d8d8" stroke-width="0.6"/></svg>
<svg style="left:1.6px;top:37px;" width="4" height="2.4" viewBox="0 0 4 2.4"><path d="M0.3 0.3l0.9 0.9l-0.9 0.9M1.9 0.3l0.9 0.9l-0.9 0.9" fill="none" stroke="#cfcfcf" stroke-width="0.5"/></svg>
<div style="left:4px;top:42px;width:8px;height:0.9px;background:#1f1f1f;border-radius:0.4px;"></div>
<svg style="left:659px;top:37.2px;" width="4" height="2.4" viewBox="0 0 4 2.4"><path d="M1.2 0.3l-0.9 0.9l0.9 0.9M2.8 0.3l-0.9 0.9l0.9 0.9" fill="none" stroke="#cfcfcf" stroke-width="0.5"/></svg>
<svg style="left:754.4px;top:37.2px;" width="4" height="2.4" viewBox="0 0 4 2.4"><path d="M0.3 0.3l0.9 0.9l-0.9 0.9M1.9 0.3l0.9 0.9l-0.9 0.9" fill="none" stroke="#cfcfcf" stroke-width="0.5"/></svg>
<svg style="left:0px;top:0px;" width="760" height="410" viewBox="0 0 760 410"><rect x="27" y="51.9" width="0.5" height="1.1" fill="#666"/><rect x="31.75" y="50.4" width="0.5" height="2.6" fill="#8a8a8a"/><rect x="36.5" y="51.9" width="0.5" height="1.1" fill="#666"/><rect x="41.25" y="51.2" width="0.5" height="1.8" fill="#777"/><rect x="46" y="51.9" width="0.5" height="1.1" fill="#666"/><rect x="50.75" y="46" width="0.5" height="7" fill="#9a9a9a"/><rect x="55.5" y="51.9" width="0.5" height="1.1" fill="#666"/><rect x="60.25" y="51.2" width="0.5" height="1.8" fill="#777"/><rect x="65" y="51.9" width="0.5" height="1.1" fill="#666"/><rect x="69.75" y="50.4" width="0.5" height="2.6" fill="#8a8a8a"/><rect x="74.5" y="51.9" width="0.5" height="1.1" fill="#666"/><rect x="79.25" y="51.2" width="0.5" height="1.8" fill="#777"/><rect x="84" y="51.9" width="0.5" height="1.1" fill="#666"/><rect x="88.75" y="46" width="0.5" height="7" fill="#9a9a9a"/><rect x="93.5" y="51.9" width="0.5" height="1.1" fill="#666"/><rect x="98.25" y="51.2" width="0.5" height="1.8" fill="#777"/><rect x="103" y="51.9" width="0.5" height="1.1" fill="#666"/><rect x="107.75" y="50.4" width="0.5" height="2.6" fill="#8a8a8a"/><rect x="112.5" y="51.9" width="0.5" height="1.1" fill="#666"/><rect x="117.25" y="51.2" width="0.5" height="1.8" fill="#777"/><rect x="122" y="51.9" width="0.5" height="1.1" fill="#666"/><rect x="126.75" y="46" width="0.5" height="7" fill="#9a9a9a"/><rect x="131.5" y="51.9" width="0.5" height="1.1" fill="#666"/><rect x="136.25" y="51.2" width="0.5" height="1.8" fill="#777"/><rect x="141" y="51.9" width="0.5" height="1.1" fill="#666"/><rect x="145.75" y="50.4" width="0.5" height="2.6" fill="#8a8a8a"/><rect x="150.5" y="51.9" width="0.5" height="1.1" fill="#666"/><rect x="155.25" y="51.2" width="0.5" height="1.8" fill="#777"/><rect x="160" y="51.9" width="0.5" height="1.1" fill="#666"/><rect x="164.75" y="46" width="0.5" height="7" fill="#9a9a9a"/><rect x="169.5" y="51.9" width="0.5" height="1.1" fill="#666"/><rect x="174.25" y="51.2" width="0.5" height="1.8" fill="#777"/><rect x="179" y="51.9" width="0.5" height="1.1" fill="#666"/><rect x="183.75" y="50.4" width="0.5" height="2.6" fill="#8a8a8a"/><rect x="188.5" y="51.9" width="0.5" height="1.1" fill="#666"/><rect x="193.25" y="51.2" width="0.5" height="1.8" fill="#777"/><rect x="198" y="51.9" width="0.5" height="1.1" fill="#666"/><rect x="202.75" y="46" width="0.5" height="7" fill="#9a9a9a"/><rect x="207.5" y="51.9" width="0.5" height="1.1" fill="#666"/><rect x="212.25" y="51.2" width="0.5" height="1.8" fill="#777"/><rect x="217" y="51.9" width="0.5" height="1.1" fill="#666"/><rect x="221.75" y="50.4" width="0.5" height="2.6" fill="#8a8a8a"/><rect x="226.5" y="51.9" width="0.5" height="1.1" fill="#666"/><rect x="231.25" y="51.2" width="0.5" height="1.8" fill="#777"/><rect x="236" y="51.9" width="0.5" height="1.1" fill="#666"/><rect x="240.75" y="46" width="0.5" height="7" fill="#9a9a9a"/><rect x="245.5" y="51.9" width="0.5" height="1.1" fill="#666"/><rect x="250.25" y="51.2" width="0.5" height="1.8" fill="#777"/><rect x="255" y="51.9" width="0.5" height="1.1" fill="#666"/><rect x="259.75" y="50.4" width="0.5" height="2.6" fill="#8a8a8a"/><rect x="264.5" y="51.9" width="0.5" height="1.1" fill="#666"/><rect x="269.25" y="51.2" width="0.5" height="1.8" fill="#777"/><rect x="274" y="51.9" width="0.5" height="1.1" fill="#666"/><rect x="278.75" y="46" width="0.5" height="7" fill="#9a9a9a"/><rect x="283.5" y="51.9" width="0.5" height="1.1" fill="#666"/><rect x="288.25" y="51.2" width="0.5" height="1.8" fill="#777"/><rect x="293" y="51.9" width="0.5" height="1.1" fill="#666"/><rect x="297.75" y="50.4" width="0.5" height="2.6" fill="#8a8a8a"/><rect x="302.5" y="51.9" width="0.5" height="1.1" fill="#666"/><rect x="307.25" y="51.2" width="0.5" height="1.8" fill="#777"/><rect x="312" y="51.9" width="0.5" height="1.1" fill="#666"/><rect x="316.75" y="46" width="0.5" height="7" fill="#9a9a9a"/><rect x="321.5" y="51.9" width="0.5" height="1.1" fill="#666"/><rect x="326.25" y="51.2" width="0.5" height="1.8" fill="#777"/><rect x="331" y="51.9" width="0.5" height="1.1" fill="#666"/><rect x="335.75" y="50.4" width="0.5" height="2.6" fill="#8a8a8a"/><rect x="340.5" y="51.9" width="0.5" height="1.1" fill="#666"/><rect x="345.25" y="51.2" width="0.5" height="1.8" fill="#777"/><rect x="350" y="51.9" width="0.5" height="1.1" fill="#666"/><rect x="354.75" y="46" width="0.5" height="7" fill="#9a9a9a"/><rect x="359.5" y="51.9" width="0.5" height="1.1" fill="#666"/><rect x="364.25" y="51.2" width="0.5" height="1.8" fill="#777"/><rect x="369" y="51.9" width="0.5" height="1.1" fill="#666"/><rect x="373.75" y="50.4" width="0.5" height="2.6" fill="#8a8a8a"/><rect x="378.5" y="51.9" width="0.5" height="1.1" fill="#666"/><rect x="383.25" y="51.2" width="0.5" height="1.8" fill="#777"/><rect x="388" y="51.9" width="0.5" height="1.1" fill="#666"/><rect x="392.75" y="46" width="0.5" height="7" fill="#9a9a9a"/><rect x="397.5" y="51.9" width="0.5" height="1.1" fill="#666"/><rect x="402.25" y="51.2" width="0.5" height="1.8" fill="#777"/><rect x="407" y="51.9" width="0.5" height="1.1" fill="#666"/><rect x="411.75" y="50.4" width="0.5" height="2.6" fill="#8a8a8a"/><rect x="416.5" y="51.9" width="0.5" height="1.1" fill="#666"/><rect x="421.25" y="51.2" width="0.5" height="1.8" fill="#777"/><rect x="426" y="51.9" width="0.5" height="1.1" fill="#666"/><rect x="430.75" y="46" width="0.5" height="7" fill="#9a9a9a"/><rect x="435.5" y="51.9" width="0.5" height="1.1" fill="#666"/><rect x="440.25" y="51.2" width="0.5" height="1.8" fill="#777"/><rect x="445" y="51.9" width="0.5" height="1.1" fill="#666"/><rect x="449.75" y="50.4" width="0.5" height="2.6" fill="#8a8a8a"/><rect x="454.5" y="51.9" width="0.5" height="1.1" fill="#666"/><rect x="459.25" y="51.2" width="0.5" height="1.8" fill="#777"/><rect x="464" y="51.9" width="0.5" height="1.1" fill="#666"/><rect x="468.75" y="46" width="0.5" height="7" fill="#9a9a9a"/><rect x="473.5" y="51.9" width="0.5" height="1.1" fill="#666"/><rect x="478.25" y="51.2" width="0.5" height="1.8" fill="#777"/><rect x="483" y="51.9" width="0.5" height="1.1" fill="#666"/><rect x="487.75" y="50.4" width="0.5" height="2.6" fill="#8a8a8a"/><rect x="492.5" y="51.9" width="0.5" height="1.1" fill="#666"/><rect x="497.25" y="51.2" width="0.5" height="1.8" fill="#777"/><rect x="502" y="51.9" width="0.5" height="1.1" fill="#666"/><rect x="506.75" y="46" width="0.5" height="7" fill="#9a9a9a"/><rect x="511.5" y="51.9" width="0.5" height="1.1" fill="#666"/><rect x="516.25" y="51.2" width="0.5" height="1.8" fill="#777"/><rect x="521" y="51.9" width="0.5" height="1.1" fill="#666"/><rect x="525.75" y="50.4" width="0.5" height="2.6" fill="#8a8a8a"/><rect x="530.5" y="51.9" width="0.5" height="1.1" fill="#666"/><rect x="535.25" y="51.2" width="0.5" height="1.8" fill="#777"/><rect x="540" y="51.9" width="0.5" height="1.1" fill="#666"/><rect x="544.75" y="46" width="0.5" height="7" fill="#9a9a9a"/><rect x="549.5" y="51.9" width="0.5" height="1.1" fill="#666"/><rect x="554.25" y="51.2" width="0.5" height="1.8" fill="#777"/><rect x="559" y="51.9" width="0.5" height="1.1" fill="#666"/><rect x="563.75" y="50.4" width="0.5" height="2.6" fill="#8a8a8a"/><rect x="568.5" y="51.9" width="0.5" height="1.1" fill="#666"/><rect x="573.25" y="51.2" width="0.5" height="1.8" fill="#777"/><rect x="578" y="51.9" width="0.5" height="1.1" fill="#666"/><rect x="582.75" y="46" width="0.5" height="7" fill="#9a9a9a"/><rect x="587.5" y="51.9" width="0.5" height="1.1" fill="#666"/><rect x="592.25" y="51.2" width="0.5" height="1.8" fill="#777"/><rect x="597" y="51.9" width="0.5" height="1.1" fill="#666"/><rect x="601.75" y="50.4" width="0.5" height="2.6" fill="#8a8a8a"/><rect x="606.5" y="51.9" width="0.5" height="1.1" fill="#666"/><rect x="19.6" y="57.75" width="2.4" height="0.5" fill="#8a8a8a"/><rect x="21" y="62.5" width="1" height="0.5" fill="#666"/><rect x="20.3" y="67.25" width="1.7" height="0.5" fill="#777"/><rect x="21" y="72" width="1" height="0.5" fill="#666"/><rect x="16" y="76.75" width="6" height="0.5" fill="#9a9a9a"/><rect x="21" y="81.5" width="1" height="0.5" fill="#666"/><rect x="20.3" y="86.25" width="1.7" height="0.5" fill="#777"/><rect x="21" y="91" width="1" height="0.5" fill="#666"/><rect x="19.6" y="95.75" width="2.4" height="0.5" fill="#8a8a8a"/><rect x="21" y="100.5" width="1" height="0.5" fill="#666"/><rect x="20.3" y="105.25" width="1.7" height="0.5" fill="#777"/><rect x="21" y="110" width="1" height="0.5" fill="#666"/><rect x="16" y="114.75" width="6" height="0.5" fill="#9a9a9a"/><rect x="21" y="119.5" width="1" height="0.5" fill="#666"/><rect x="20.3" y="124.25" width="1.7" height="0.5" fill="#777"/><rect x="21" y="129" width="1" height="0.5" fill="#666"/><rect x="19.6" y="133.75" width="2.4" height="0.5" fill="#8a8a8a"/><rect x="21" y="138.5" width="1" height="0.5" fill="#666"/><rect x="20.3" y="143.25" width="1.7" height="0.5" fill="#777"/><rect x="21" y="148" width="1" height="0.5" fill="#666"/><rect x="16" y="152.75" width="6" height="0.5" fill="#9a9a9a"/><rect x="21" y="157.5" width="1" height="0.5" fill="#666"/><rect x="20.3" y="162.25" width="1.7" height="0.5" fill="#777"/><rect x="21" y="167" width="1" height="0.5" fill="#666"/><rect x="19.6" y="171.75" width="2.4" height="0.5" fill="#8a8a8a"/><rect x="21" y="176.5" width="1" height="0.5" fill="#666"/><rect x="20.3" y="181.25" width="1.7" height="0.5" fill="#777"/><rect x="21" y="186" width="1" height="0.5" fill="#666"/><rect x="16" y="190.75" width="6" height="0.5" fill="#9a9a9a"/><rect x="21" y="195.5" width="1" height="0.5" fill="#666"/><rect x="20.3" y="200.25" width="1.7" height="0.5" fill="#777"/><rect x="21" y="205" width="1" height="0.5" fill="#666"/><rect x="19.6" y="209.75" width="2.4" height="0.5" fill="#8a8a8a"/><rect x="21" y="214.5" width="1" height="0.5" fill="#666"/><rect x="20.3" y="219.25" width="1.7" height="0.5" fill="#777"/><rect x="21" y="224" width="1" height="0.5" fill="#666"/><rect x="16" y="228.75" width="6" height="0.5" fill="#9a9a9a"/><rect x="21" y="233.5" width="1" height="0.5" fill="#666"/><rect x="20.3" y="238.25" width="1.7" height="0.5" fill="#777"/><rect x="21" y="243" width="1" height="0.5" fill="#666"/><rect x="19.6" y="247.75" width="2.4" height="0.5" fill="#8a8a8a"/><rect x="21" y="252.5" width="1" height="0.5" fill="#666"/><rect x="20.3" y="257.25" width="1.7" height="0.5" fill="#777"/><rect x="21" y="262" width="1" height="0.5" fill="#666"/><rect x="16" y="266.75" width="6" height="0.5" fill="#9a9a9a"/><rect x="21" y="271.5" width="1" height="0.5" fill="#666"/><rect x="20.3" y="276.25" width="1.7" height="0.5" fill="#777"/><rect x="21" y="281" width="1" height="0.5" fill="#666"/><rect x="19.6" y="285.75" width="2.4" height="0.5" fill="#8a8a8a"/><rect x="21" y="290.5" width="1" height="0.5" fill="#666"/><rect x="20.3" y="295.25" width="1.7" height="0.5" fill="#777"/><rect x="21" y="300" width="1" height="0.5" fill="#666"/><rect x="16" y="304.75" width="6" height="0.5" fill="#9a9a9a"/><rect x="21" y="309.5" width="1" height="0.5" fill="#666"/><rect x="20.3" y="314.25" width="1.7" height="0.5" fill="#777"/><rect x="21" y="319" width="1" height="0.5" fill="#666"/><rect x="19.6" y="323.75" width="2.4" height="0.5" fill="#8a8a8a"/><rect x="21" y="328.5" width="1" height="0.5" fill="#666"/><rect x="20.3" y="333.25" width="1.7" height="0.5" fill="#777"/><rect x="21" y="338" width="1" height="0.5" fill="#666"/><rect x="16" y="342.75" width="6" height="0.5" fill="#9a9a9a"/><rect x="21" y="347.5" width="1" height="0.5" fill="#666"/><rect x="20.3" y="352.25" width="1.7" height="0.5" fill="#777"/><rect x="21" y="357" width="1" height="0.5" fill="#666"/><rect x="19.6" y="361.75" width="2.4" height="0.5" fill="#8a8a8a"/><rect x="21" y="366.5" width="1" height="0.5" fill="#666"/><rect x="20.3" y="371.25" width="1.7" height="0.5" fill="#777"/><rect x="21" y="376" width="1" height="0.5" fill="#666"/><rect x="16" y="380.75" width="6" height="0.5" fill="#9a9a9a"/><rect x="21" y="385.5" width="1" height="0.5" fill="#666"/><rect x="20.3" y="390.25" width="1.7" height="0.5" fill="#777"/><rect x="21" y="395" width="1" height="0.5" fill="#666"/><rect x="19.6" y="399.75" width="2.4" height="0.5" fill="#8a8a8a"/></svg>
<span id="t61" class="t" style="top:46.94px;font-size:3.6px;line-height:4.32px;color:#e4e4e4;left:51.9px;-webkit-text-stroke-width:0.1px;">0</span>
<span id="t62" class="t" style="top:46.94px;font-size:3.6px;line-height:4.32px;color:#e4e4e4;left:89.9px;-webkit-text-stroke-width:0.1px;">1</span>
<span id="t63" class="t" style="top:46.94px;font-size:3.6px;line-height:4.32px;color:#e4e4e4;left:127.9px;-webkit-text-stroke-width:0.1px;">2</span>
<span id="t64" class="t" style="top:46.94px;font-size:3.6px;line-height:4.32px;color:#e4e4e4;left:165.9px;-webkit-text-stroke-width:0.1px;">3</span>
<span id="t65" class="t" style="top:46.94px;font-size:3.6px;line-height:4.32px;color:#e4e4e4;left:203.9px;-webkit-text-stroke-width:0.1px;">4</span>
<span id="t66" class="t" style="top:46.94px;font-size:3.6px;line-height:4.32px;color:#e4e4e4;left:241.9px;-webkit-text-stroke-width:0.1px;">5</span>
<span id="t67" class="t" style="top:46.94px;font-size:3.6px;line-height:4.32px;color:#e4e4e4;left:279.9px;-webkit-text-stroke-width:0.1px;">6</span>
<span id="t68" class="t" style="top:46.94px;font-size:3.6px;line-height:4.32px;color:#e4e4e4;left:317.9px;-webkit-text-stroke-width:0.1px;">7</span>
<span id="t69" class="t" style="top:46.94px;font-size:3.6px;line-height:4.32px;color:#e4e4e4;left:355.9px;-webkit-text-stroke-width:0.1px;">8</span>
<span id="t70" class="t" style="top:46.94px;font-size:3.6px;line-height:4.32px;color:#e4e4e4;left:393.9px;-webkit-text-stroke-width:0.1px;">9</span>
<span id="t71" class="t" style="top:46.94px;font-size:3.6px;line-height:4.32px;color:#e4e4e4;left:431.9px;-webkit-text-stroke-width:0.1px;">10</span>
<span id="t72" class="t" style="top:46.94px;font-size:3.6px;line-height:4.32px;color:#e4e4e4;left:469.9px;-webkit-text-stroke-width:0.1px;">11</span>
<span id="t73" class="t" style="top:46.94px;font-size:3.6px;line-height:4.32px;color:#e4e4e4;left:507.9px;-webkit-text-stroke-width:0.1px;">12</span>
<span id="t74" class="t" style="top:46.94px;font-size:3.6px;line-height:4.32px;color:#e4e4e4;left:545.9px;-webkit-text-stroke-width:0.1px;">13</span>
<span id="t75" class="t" style="top:46.94px;font-size:3.6px;line-height:4.32px;color:#e4e4e4;left:583.9px;-webkit-text-stroke-width:0.1px;">14</span>
<span id="t76" class="t" style="top:78.34px;font-size:3.6px;line-height:4.32px;color:#e4e4e4;left:17.1px;-webkit-text-stroke-width:0.1px;">0</span>
<span id="t77" class="t" style="top:116.34px;font-size:3.6px;line-height:4.32px;color:#e4e4e4;left:17.1px;-webkit-text-stroke-width:0.1px;">1</span>
<span id="t78" class="t" style="top:154.34px;font-size:3.6px;line-height:4.32px;color:#e4e4e4;left:17.1px;-webkit-text-stroke-width:0.1px;">2</span>
<span id="t79" class="t" style="top:192.34px;font-size:3.6px;line-height:4.32px;color:#e4e4e4;left:17.1px;-webkit-text-stroke-width:0.1px;">3</span>
<span id="t80" class="t" style="top:230.34px;font-size:3.6px;line-height:4.32px;color:#e4e4e4;left:17.1px;-webkit-text-stroke-width:0.1px;">4</span>
<span id="t81" class="t" style="top:268.34px;font-size:3.6px;line-height:4.32px;color:#e4e4e4;left:17.1px;-webkit-text-stroke-width:0.1px;">5</span>
<span id="t82" class="t" style="top:306.34px;font-size:3.6px;line-height:4.32px;color:#e4e4e4;left:17.1px;-webkit-text-stroke-width:0.1px;">6</span>
<span id="t83" class="t" style="top:344.34px;font-size:3.6px;line-height:4.32px;color:#e4e4e4;left:17.1px;-webkit-text-stroke-width:0.1px;">7</span>
<span id="t84" class="t" style="top:382.34px;font-size:3.6px;line-height:4.32px;color:#e4e4e4;left:17.1px;-webkit-text-stroke-width:0.1px;">8</span>
<svg style="left:15.9px;top:45.8px;" width="6.1" height="7.2" viewBox="0 0 6.1 7.2"><path d="M3.1 1v5.4M0.6 3.7h5" stroke="#9a9a9a" stroke-width="0.5" stroke-dasharray="0.6 0.5"/></svg>
<svg style="left:610.2px;top:47.6px;" width="6.3" height="5" viewBox="0 0 6.3 5"><path d="M1.4 3.6L3.1 1.2L4.8 3.6Z" fill="#e8e8e8"/></svg>
<svg style="left:610.2px;top:399.4px;" width="6.3" height="5" viewBox="0 0 6.3 5"><path d="M1.4 1.2L3.1 3.6L4.8 1.2Z" fill="#e8e8e8"/></svg>
<svg style="left:16.5px;top:404.3px;" width="600" height="6" viewBox="0 0 600 6"><path d="M6 1.6v2.8M8.4 1.6L6.6 3L8.4 4.4Z" fill="#9c9c9c" stroke="#9c9c9c" stroke-width="0.4"/><path d="M15.4 1.6L13.6 3L15.4 4.4Z" fill="#9c9c9c"/><path d="M51.6 2.2h2.6l-1.3 1.7Z" fill="#e8e8e8"/><path d="M61.4 1.6L63.2 3L61.4 4.4Z" fill="#9c9c9c"/><path d="M69.6 1.6L71.4 3L69.6 4.4ZM72 1.6v2.8" fill="#9c9c9c" stroke="#9c9c9c" stroke-width="0.4"/><circle cx="81.6" cy="3" r="1.9" fill="none" stroke="#d4d4d4" stroke-width="0.7"/><path d="M80.4 1.8l2.6 2.6" stroke="#d4d4d4" stroke-width="0.6"/><path d="M132.2 2.2h2.6l-1.3 1.7Z" fill="#e8e8e8"/><circle cx="142.4" cy="3.1" r="1.7" fill="#4cb43c"/><path d="M172.6 2.2h2.4l-1.2 1.6Z" fill="#d8d8d8"/><path d="M182.4 1.6L180.6 3L182.4 4.4Z" fill="#e8e8e8"/><path d="M579.6 1.6L581.4 3L579.6 4.4Z" fill="#e8e8e8"/><rect x="586.6" y="1" width="5.4" height="4.2" fill="none" stroke="#e0e0e0" stroke-width="0.7"/><path d="M589.3 1v4.2" stroke="#e0e0e0" stroke-width="0.7"/></svg>
<div style="left:2px;top:46.8px;width:12.2px;height:8px;background:#272727;border-radius:1px;"></div>
<svg style="left:3px;top:46.8px;" width="10" height="8" viewBox="0 0 10 8"><path d="M2.8 0.8V6.6L4.3 5.3L5.3 7.4L6.1 7L5.1 5L6.9 4.8Z" fill="#1a1a1a" stroke="#e2e2e2" stroke-width="0.6" stroke-linejoin="round"/></svg>
<svg style="left:3px;top:56.5px;" width="10" height="8" viewBox="0 0 10 8"><path d="M2.8 0.8V6.8L4.3 5.4L5.3 7.5L6.3 7L5.3 5L7.2 4.9Z" fill="#e2e2e2"/></svg>
<svg style="left:3px;top:66px;" width="10" height="8" viewBox="0 0 10 8"><path d="M2.8 0.8H5.4L7 2.4V7.2H2.8Z" fill="#e2e2e2"/><path d="M5.4 0.8V2.4H7" fill="none" stroke="#555" stroke-width="0.5"/><path d="M7.6 5.6l1 1.6h-1.6" fill="#e2e2e2"/></svg>
<svg style="left:3px;top:75.4px;" width="10" height="8" viewBox="0 0 10 8"><path d="M0.8 1.2v5.6M9.2 1.2v5.6M2 4h6M2 4l1.2-1.1M2 4l1.2 1.1M8 4l-1.2-1.1M8 4l-1.2 1.1" fill="none" stroke="#e2e2e2" stroke-width="0.75"/></svg>
<svg style="left:3px;top:85px;" width="10" height="8" viewBox="0 0 10 8"><path d="M1.8 7V4.2L3.6 5.4L5.6 3.2L7.6 4.6V7Z" fill="#e2e2e2"/><path d="M2.6 0.8v2.4l0.7-0.6l0.6 1" stroke="#e2e2e2" stroke-width="0.6" fill="none"/><rect x="8" y="6.4" width="0.9" height="0.9" fill="#e2e2e2"/></svg>
<div style="left:1px;top:94.4px;width:14px;height:0.6px;background:#3a3a3a;"></div>
<span id="t85" class="t" style="top:95.78px;font-size:7.2px;line-height:8.64px;color:#e2e2e2;left:5.2px;font-weight:700;font-family:'Liberation Serif',serif;-webkit-text-stroke-width:0.1px;">T</span>
<svg style="left:11px;top:101.4px;" width="1.2" height="1.2" viewBox="0 0 1.2 1.2"><rect width="0.9" height="0.9" fill="#e2e2e2"/></svg>
<svg style="left:3px;top:105px;" width="10" height="8" viewBox="0 0 10 8"><path d="M2.4 6.6L7.4 1.4" stroke="#e2e2e2" stroke-width="0.8"/></svg>
<svg style="left:3px;top:114.4px;" width="10" height="8" viewBox="0 0 10 8"><path d="M2 7.2L2.6 4.4L5.6 1L7.6 2.8L4.6 6.2Z" fill="#e2e2e2"/><path d="M4.4 3.8l1.2 1.2" stroke="#444" stroke-width="0.5"/><rect x="8.2" y="6.4" width="0.9" height="0.9" fill="#e2e2e2"/></svg>
<svg style="left:3px;top:124px;" width="10" height="8" viewBox="0 0 10 8"><path d="M2 7.2L2.5 5.4L6.4 1.2L7.8 2.6L3.8 6.8Z" fill="#e2e2e2"/><rect x="8.2" y="6.4" width="0.9" height="0.9" fill="#e2e2e2"/></svg>
<svg style="left:3px;top:133.6px;" width="10" height="8" viewBox="0 0 10 8"><rect x="1.4" y="1.4" width="6.4" height="5" fill="none" stroke="#e2e2e2" stroke-width="0.7"/><path d="M1.4 1.4l6.4 5M7.8 1.4l-6.4 5" stroke="#e2e2e2" stroke-width="0.5"/><rect x="8.4" y="6.4" width="0.9" height="0.9" fill="#e2e2e2"/></svg>
<svg style="left:3px;top:143px;" width="10" height="8" viewBox="0 0 10 8"><rect x="1.4" y="1.4" width="6.4" height="5" fill="#6a6a6a" stroke="#e2e2e2" stroke-width="0.7"/><rect x="8.4" y="6.4" width="0.9" height="0.9" fill="#e2e2e2"/></svg>
<div style="left:1px;top:152px;width:14px;height:0.6px;background:#3a3a3a;"></div>
<svg style="left:3px;top:153.4px;" width="10" height="8" viewBox="0 0 10 8"><path d="M2 1.6L7.6 5.6M2 6.4L7.6 2.4" stroke="#e2e2e2" stroke-width="0.7"/><circle cx="2.2" cy="1.8" r="0.9" fill="none" stroke="#e2e2e2" stroke-width="0.55"/><circle cx="2.2" cy="6.2" r="0.9" fill="none" stroke="#e2e2e2" stroke-width="0.55"/></svg>
<svg style="left:3px;top:163px;" width="10" height="8" viewBox="0 0 10 8"><rect x="1.6" y="1.6" width="5.8" height="4.8" fill="none" stroke="#e2e2e2" stroke-width="0.55" stroke-dasharray="0.9 0.6"/><path d="M2.4 2v4l1-0.9l0.8 1.5l0.7-0.4L4.2 4.8l1.3-0.1Z" fill="#e2e2e2"/><rect x="8.4" y="6.4" width="0.9" height="0.9" fill="#e2e2e2"/></svg>
<div style="left:4.4px;top:173.4px;width:6.6px;height:5.6px;background:linear-gradient(90deg,#f4f4f4,#555);box-shadow:0 0 0 0.5px #bdbdbd;"></div>
<div style="left:4.4px;top:183px;width:6.6px;height:5.6px;background:linear-gradient(180deg,#f4f4f4 45%,#555);box-shadow:0 0 0 0.5px #bdbdbd;"></div>
<div style="left:1px;top:191.2px;width:14px;height:0.6px;background:#3a3a3a;"></div>
<svg style="left:3px;top:192.6px;" width="10" height="8" viewBox="0 0 10 8"><path d="M1.8 1.4H8V6.6H3.4L1.8 5Z" fill="#e2e2e2"/><path d="M3.2 3h3.4M3.2 4.4h2.4" stroke="#555" stroke-width="0.5"/><rect x="8.6" y="6.6" width="0.9" height="0.9" fill="#e2e2e2"/></svg>
<svg style="left:3px;top:202.4px;" width="10" height="8" viewBox="0 0 10 8"><path d="M2 7.2L2.4 5.6L5.6 2.4L6.8 3.6L3.6 6.8Z" fill="#e2e2e2"/><path d="M5.4 1.6L7.6 3.8" stroke="#e2e2e2" stroke-width="1.1"/><rect x="8.6" y="6.6" width="0.9" height="0.9" fill="#e2e2e2"/></svg>
<svg style="left:3px;top:211.6px;" width="10" height="8" viewBox="0 0 10 8"><path d="M2.6 4.2V2.2a0.5 0.5 0 0 1 1 0V1.4a0.5 0.5 0 0 1 1 0v0.2a0.5 0.5 0 0 1 1 0v0.6a0.5 0.5 0 0 1 1 0V5.2L5.8 7.2H3.4L1.8 4.8a0.5 0.5 0 0 1 0.8-0.6Z" fill="#e2e2e2"/></svg>
<svg style="left:3px;top:221px;" width="10" height="8" viewBox="0 0 10 8"><circle cx="4" cy="3.4" r="2.3" fill="#6a6a6a" stroke="#e2e2e2" stroke-width="0.75"/><path d="M5.7 5.1L7.8 7.2" stroke="#e2e2e2" stroke-width="1"/></svg>
<div style="left:4px;top:231.6px;width:6.4px;height:6.4px;background:#fff;box-shadow:0 0 0 0.4px #999;"></div>
<svg style="left:4px;top:231.6px;" width="6.4" height="6.4" viewBox="0 0 6.4 6.4"><path d="M0.4 6L6 0.4" stroke="#e0231b" stroke-width="0.9"/></svg>
<svg style="left:10.4px;top:230.6px;" width="3.4" height="3.4" viewBox="0 0 3.4 3.4"><path d="M0.4 0.6a2.4 2.4 0 0 1 2.4 2.4" fill="none" stroke="#bdbdbd" stroke-width="0.5"/></svg>
<svg style="left:3.6px;top:240.2px;" width="4.6" height="4.6" viewBox="0 0 4.6 4.6"><rect x="0.4" y="0.4" width="2.4" height="2.4" fill="#fff" stroke="#888" stroke-width="0.3"/><path d="M0.6 2.6L2.6 0.6" stroke="#e0231b" stroke-width="0.5"/><rect x="1.8" y="1.8" width="2.2" height="2.2" fill="#111" stroke="#bbb" stroke-width="0.3"/></svg>
<svg style="left:3.8px;top:246.4px;" width="10" height="4" viewBox="0 0 10 4"><rect x="0.4" y="0.5" width="2.8" height="2.6" fill="none" stroke="#e2e2e2" stroke-width="0.7"/></svg>
<span id="t86" class="t" style="top:246.16px;font-size:4.4px;line-height:5.28px;color:#e2e2e2;left:9.2px;font-weight:700;-webkit-text-stroke-width:0px;">T</span>
<div style="left:3px;top:252.4px;width:9.4px;height:9px;background:#2a2a2a;border-radius:1px;"></div>
<div style="left:4.6px;top:253.8px;width:6px;height:6px;background:#fff;"></div>
<svg style="left:4.6px;top:253.8px;" width="6" height="6" viewBox="0 0 6 6"><path d="M0.3 5.7L5.7 0.3" stroke="#e0231b" stroke-width="0.9"/></svg>
<svg style="left:12px;top:260px;" width="1.4" height="1.4" viewBox="0 0 1.4 1.4"><rect width="0.9" height="0.9" fill="#e2e2e2"/></svg>
<div style="left:3px;top:264.6px;width:9.4px;height:8.6px;background:#2a2a2a;border-radius:1px;"></div>
<svg style="left:5.6px;top:266.4px;" width="5" height="5" viewBox="0 0 5 5"><rect x="0.4" y="0.4" width="3.8" height="3.8" fill="#9a9a9a" stroke="#e2e2e2" stroke-width="0.6"/><rect x="1.5" y="1.5" width="1.6" height="1.6" fill="#3a3a3a"/></svg>
<svg style="left:12px;top:271.8px;" width="1.4" height="1.4" viewBox="0 0 1.4 1.4"><rect width="0.9" height="0.9" fill="#e2e2e2"/></svg>
<svg style="left:621px;top:45.6px;" width="8" height="7.4" viewBox="0 0 8 7.4"><path d="M0.6 1.8C1.6 1 3 1 3.9 1.8V6.6C3 5.9 1.6 5.9 0.6 6.6Z M4.1 1.8C5 1 6.4 1 7.4 1.8V6.6C6.4 5.9 5 5.9 4.1 6.6Z" fill="#d8d8d8"/><path d="M4 0.6V6.8" stroke="#f4f4f4" stroke-width="0.5"/></svg>
<svg style="left:621px;top:57.2px;" width="8" height="7.6" viewBox="0 0 8 7.6"><path d="M4 0.6L7.4 2.4L4 4.2L0.6 2.4Z" fill="#e6e6e6"/><path d="M0.8 3.9L4 5.6L7.2 3.9M0.8 5.3L4 7L7.2 5.3" fill="none" stroke="#e6e6e6" stroke-width="0.7"/></svg>
<svg style="left:620.6px;top:69.1px;" width="9" height="6" viewBox="0 0 9 6"><circle cx="2.5" cy="3" r="1.9" fill="none" stroke="#e6e6e6" stroke-width="0.8"/><circle cx="6.5" cy="3" r="1.9" fill="none" stroke="#e6e6e6" stroke-width="0.8"/></svg>
<svg style="left:621px;top:85.3px;" width="8" height="6" viewBox="0 0 8 6"><path d="M0.4 0.8h7" stroke="#dcdcdc" stroke-width="0.6"/><path d="M0.4 2.8h7" stroke="#dcdcdc" stroke-width="1.1"/><path d="M0.4 5h7" stroke="#dcdcdc" stroke-width="1.5"/></svg>
<svg style="left:620.6px;top:95.2px;" width="9" height="8" viewBox="0 0 9 8"><ellipse cx="4.4" cy="4.2" rx="3.8" ry="2.8" fill="none" stroke="#e6e6e6" stroke-width="0.8"/><circle cx="3" cy="3.8" r="0.7" fill="#e6e6e6"/><circle cx="4.6" cy="3" r="0.7" fill="#e6e6e6"/><circle cx="6" cy="3.8" r="0.7" fill="#e6e6e6"/><path d="M3.4 5.6a1.2 0.8 0 0 0 2.2 0" fill="none" stroke="#e6e6e6" stroke-width="0.6"/></svg>
<svg style="left:621.2px;top:112.6px;" width="7.4" height="6" viewBox="0 0 7.4 6"><rect x="0.4" y="0.4" width="6.4" height="4.8" fill="none" stroke="#e0e0e0" stroke-width="0.7"/><path d="M2.5 0.4v4.8M4.7 0.4v4.8M0.4 2.8h6.4" stroke="#e0e0e0" stroke-width="0.5"/><rect x="0.7" y="0.7" width="1.6" height="1.9" fill="#9a9a9a"/></svg>
<svg style="left:667.6px;top:44.8px;" width="3" height="4" viewBox="0 0 3 4"><path d="M0.5 1.5l1-1l1 1M0.5 2.5l1 1l1-1" fill="none" stroke="#cfcfcf" stroke-width="0.5"/></svg>
<svg style="left:753.6px;top:44.4px;" width="4.4" height="3.8" viewBox="0 0 4.4 3.8"><rect x="0.2" y="0.2" width="4" height="3.4" fill="#6a6a6a"/></svg>
<svg style="left:731.4px;top:55.6px;" width="3.4" height="2.6" viewBox="0 0 3.4 2.6"><path d="M0.3 0.4h2.8l-1.4 1.8Z" fill="#f0f0f0"/></svg>
<svg style="left:740px;top:53.6px;" width="7" height="6.6" viewBox="0 0 7 6.6"><rect x="1.2" y="1" width="2" height="2" fill="#f2f2f2"/><rect x="3.8" y="1" width="2" height="2" fill="#f2f2f2"/><rect x="1.2" y="3.6" width="2" height="2" fill="#f2f2f2"/><rect x="3.8" y="3.6" width="2" height="2" fill="#f2f2f2"/></svg>
<svg style="left:750px;top:54px;" width="5.4" height="6" viewBox="0 0 5.4 6"><rect x="0.3" y="0.3" width="4.6" height="5" fill="#7a7a7a"/><path d="M0.3 3h4.6" stroke="#9a9a9a" stroke-width="0.5"/></svg>
<svg style="left:670px;top:64.4px;" width="4.4" height="5.4" viewBox="0 0 4.4 5.4"><circle cx="1.8" cy="1.9" r="1.4" fill="none" stroke="#3f7fd0" stroke-width="0.6"/><path d="M2.8 3l1.2 1.4" stroke="#3f7fd0" stroke-width="0.7"/></svg>
<div style="left:750.4px;top:62.8px;width:5px;height:8.6px;background:#404040;"></div>
<svg style="left:750.4px;top:62.8px;" width="5" height="8.6" viewBox="0 0 5 8.6"><path d="M1.1 3.6h2.8l-1.4 1.8Z" fill="#f0f0f0"/></svg>
<svg style="left:669.8px;top:79.8px;" width="3" height="2.6" viewBox="0 0 3 2.6"><path d="M0.3 0.4h2.4l-1.2 1.7Z" fill="#f0f0f0"/></svg>
<svg style="left:668.6px;top:403px;" width="6" height="6" viewBox="0 0 6 6"><path d="M3 0.8v4.4M0.8 3h4.4" stroke="#f2f2f2" stroke-width="0.9"/><rect x="4.6" y="5" width="0.8" height="0.8" fill="#f2f2f2"/></svg>
<svg style="left:737px;top:403.6px;" width="7" height="5.4" viewBox="0 0 7 5.4"><path d="M0.6 2.2a1.6 1.6 0 0 1 2.6-1a1.5 1.5 0 0 1 2.6 0.6a1.3 1.3 0 0 1 0.2 2.6H1.4A1.2 1.2 0 0 1 0.6 2.2Z" fill="none" stroke="#8a8a8a" stroke-width="0.6"/><circle cx="3.4" cy="2.8" r="0.9" fill="#8a8a8a"/></svg>
<svg style="left:747.2px;top:403.4px;" width="4" height="5.6" viewBox="0 0 4 5.6"><path d="M0.8 1.4h2.6v3.6H0.8ZM0.4 1.2h3.4M1.6 0.5h1" fill="#5e5e5e" stroke="#707070" stroke-width="0.45"/></svg>
<span id="wm1" class="t" style="z-index:5;left:13.3px;top:36.7px;transform:scaleX(1.088);transform-origin:0 50%;font-family:'DejaVu Sans','Liberation Sans',sans-serif;font-weight:700;font-size:18.6px;line-height:22px;letter-spacing:-0.4px;color:#fff;opacity:0.25;-webkit-text-stroke:1.3px #fff;">SOFTGOZAR.COM</span>
<span id="wm2" class="t" dir="rtl" lang="fa" style="z-index:5;right:554.4px;top:54.2px;transform:scaleX(0.877);transform-origin:100% 50%;font-family:'DejaVu Sans',sans-serif;font-size:17.2px;line-height:22px;color:rgba(255,255,255,0.27);-webkit-text-stroke:0;">اولین دانشنامه نرم افزار ایران</span>
<svg width="0" height="0" style="left:0;top:0;"><filter id="wmf" x="-5%" y="-15%" width="110%" height="130%" color-interpolation-filters="sRGB"><feMorphology in="SourceAlpha" operator="dilate" radius="0.7" result="d"/><feGaussianBlur in="d" stdDeviation="0.45" result="db"/><feComposite in="db" in2="SourceAlpha" operator="out" result="ring"/><feFlood flood-color="#7d84a0" flood-opacity="0.34" result="fl"/><feComposite in="fl" in2="ring" operator="in" result="cring"/><feColorMatrix in="SourceGraphic" type="matrix" values="1 0 0 0 0  0 1 0 0 0  0 0 1 0 0  0 0 0 0.23 0" result="fill"/><feMerge><feMergeNode in="cring"/><feMergeNode in="fill"/></feMerge></filter></svg>
<span id="wm3" class="t" style="z-index:5;left:21.2px;top:364.6px;font-weight:700;font-size:25.5px;line-height:30px;letter-spacing:-0.85px;color:#fff;filter:url(#wmf);-webkit-text-stroke:0;">filehorse<span style="font-size:13px;letter-spacing:-0.5px;">.com</span></span>
</div></body></html>
